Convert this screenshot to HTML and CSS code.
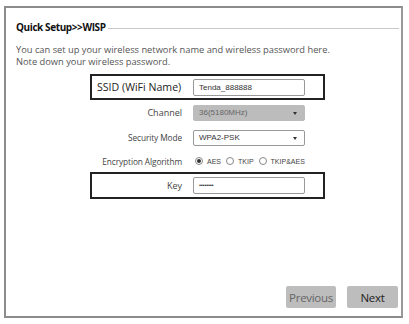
FILE: index.html
```html
<!DOCTYPE html>
<html lang="en">
<head>
    <meta charset="UTF-8">
    <title>Quick Setup - WISP</title>
    <link rel="stylesheet" href="styles.css">
</head>
<body>
    <div class="panel">
        <div class="legend">
            <span class="legend-title">Quick Setup&gt;&gt;WISP</span>
            <span class="legend-line"></span>
        </div>
        <p class="intro">You can set up your wireless network name and wireless password here.<br>Note down your wireless password.</p>

        <div class="form">
            <div class="row row-boxed row-ssid">
                <label class="label label-big">SSID (WiFi Name)</label>
                <div class="field">Tenda_888888</div>
            </div>
            <div class="row row-channel">
                <label class="label">Channel</label>
                <div class="field field-select disabled">36(5180MHz)<span class="arrow"></span></div>
            </div>
            <div class="row row-security">
                <label class="label label-small">Security Mode</label>
                <div class="field field-select">WPA2-PSK<span class="arrow"></span></div>
            </div>
            <div class="row row-enc">
                <label class="label label-small">Encryption Algorithm</label>
                <div class="radios">
                    <span class="radio checked"></span><span class="radio-text">AES</span>
                    <span class="radio"></span><span class="radio-text">TKIP</span>
                    <span class="radio"></span><span class="radio-text">TKIP&amp;AES</span>
                </div>
            </div>
            <div class="row row-boxed row-key">
                <label class="label">Key</label>
                <div class="field field-pass">&bull;&bull;&bull;&bull;&bull;&bull;&bull;&bull;</div>
            </div>
        </div>

        <div class="actions">
            <button class="btn btn-prev">Previous</button>
            <button class="btn btn-next">Next</button>
        </div>
    </div>
</body>
</html>
```

FILE: styles.css
```css
body {
    margin: 0;
    background: #fff;
    font-family: "Open Sans", "Noto Sans", sans-serif;
    color: #333;
}
.panel {
    box-sizing: border-box;
    width: 399px;
    height: 312px;
    margin: 6px 0 0 4px;
    border: 2px solid #8c8c8c;
    border-right-color: #9a9a9a;
    display: flex;
    flex-direction: column;
}
.legend {
    display: flex;
    align-items: center;
    padding: 12px 0 0 10px;
    height: 14px;
}
.legend-title {
    font-size: 10px;
    font-weight: bold;
    letter-spacing: -0.4px;
    color: #111;
}
.legend-line {
    flex: 1;
    height: 1px;
    margin: 3px 2px 0 2px;
    background: #c8c8c8;
}
.intro {
    margin: 10px 0 0 10px;
    font-size: 9.3px;
    line-height: 12px;
    color: #555;
}
.form {
    margin: 6px 0 0 84px;
    width: 235px;
}
.row {
    box-sizing: border-box;
    display: grid;
    grid-template-columns: 92px 112px;
    column-gap: 11px;
    align-items: center;
    height: 25px;
}
.row-boxed {
    border: 2px solid #222;
    grid-template-columns: 90px 112px;
}
.row-ssid { height: 26px; }
.row-enc { height: 22px; }
.row-key { height: 27px; }
.label {
    text-align: right;
    font-size: 9px;
    color: #444;
    white-space: nowrap;
}
.label-big {
    text-align: left;
    padding-left: 5px;
    font-size: 10.6px;
    color: #222;
}
.label-small {
    font-size: 8.3px;
    letter-spacing: -0.1px;
}
.field {
    box-sizing: border-box;
    height: 17px;
    border: 1px solid #999;
    border-radius: 2px;
    padding: 0 5px;
    font-family: "Liberation Sans", Arial, sans-serif;
    font-size: 8px;
    line-height: 15px;
    color: #333;
    background: #fff;
}
.field-select {
    position: relative;
    height: 16px;
    line-height: 14px;
}
.field-select.disabled {
    background: #bcbcbc;
    border-color: #bcbcbc;
    color: #666;
}
.arrow {
    position: absolute;
    right: 7px;
    top: 6px;
    border-left: 2px solid transparent;
    border-right: 2px solid transparent;
    border-top: 3px solid #333;
}
.field-pass {
    font-size: 6px;
    letter-spacing: -0.3px;
}
.radios {
    display: flex;
    align-items: center;
    font-family: "Liberation Sans", Arial, sans-serif;
    font-size: 7px;
    color: #444;
    white-space: nowrap;
    margin-left: 2px;
    width: 130px;
}
.radio {
    flex-shrink: 0;
    box-sizing: border-box;
    width: 8px;
    height: 8px;
    border: 1px solid #888;
    border-radius: 50%;
    margin-right: 4px;
    position: relative;
}
.radio.checked::after {
    content: "";
    position: absolute;
    left: 1px;
    top: 1px;
    width: 4px;
    height: 4px;
    border-radius: 50%;
    background: #333;
}
.radio-text {
    flex-shrink: 0;
    margin-right: 5px;
}
.actions {
    margin-top: auto;
    display: flex;
    justify-content: flex-end;
    gap: 11px;
    padding: 0 3px 8px 0;
}
.btn {
    height: 22px;
    border: none;
    border-radius: 2px;
    background: #bdbdbd;
    font-family: "Open Sans", "Noto Sans", sans-serif;
    font-size: 11.5px;
    letter-spacing: -0.3px;
    padding: 0;
}
.btn-prev {
    width: 50px;
    color: #666;
}
.btn-next {
    width: 51px;
    color: #222;
}
```
